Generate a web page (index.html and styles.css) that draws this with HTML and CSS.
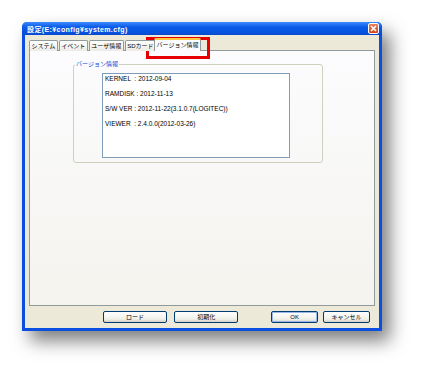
FILE: index.html
```html
<!DOCTYPE html>
<html lang="ja">
<head>
    <meta charset="UTF-8">
    <title>設定</title>
    <link rel="stylesheet" href="styles.css">
</head>
<body>

<div class="page">
    <div class="window">
        <div class="titlebar">
            <span class="title">設定(E:¥config¥system.cfg)</span>
            <span class="close">
                <svg width="9" height="9" viewBox="0 0 9 9"><path d="M2 2 L7 7 M7 2 L2 7" stroke="#fff" stroke-width="1.6"/></svg>
            </span>
        </div>
        <div class="client">
            <div class="tabs">
                <div class="tab">システム</div>
                <div class="tab">イベント</div>
                <div class="tab">ユーザ情報</div>
                <div class="tab">SDカード</div>
                <div class="tab active">バージョン情報</div>
            </div>
            <div class="panel">
                <fieldset class="group">
                    <legend>バージョン情報</legend>
                    <div class="infobox">
                        <p>KERNEL&nbsp; : 2012-09-04</p>
                        <p>RAMDISK : 2012-11-13</p>
                        <p>S/W VER : 2012-11-22(3.1.0.7(LOGITEC))</p>
                        <p>VIEWER&nbsp; : 2.4.0.0(2012-03-26)</p>
                    </div>
                </fieldset>
            </div>
            <div class="buttons">
                <button type="button" class="btn wide">ロード</button>
                <button type="button" class="btn wide">初期化</button>
                <button type="button" class="btn narrow ok">OK</button>
                <button type="button" class="btn narrow">キャンセル</button>
            </div>
        </div>
    </div>
    <!-- red mark around the active tab -->
    <div class="highlight"></div>
</div>

</body>
</html>
```

FILE: styles.css
```css
body {
    margin: 0;
    padding: 0;
    background-color: #fff;
    font-family: "Liberation Sans", "Noto Sans CJK JP", sans-serif;
    font-size: 6px;
}

.page {
    position: relative;
    width: 424px;
    height: 373px;
    padding: 22px 0 0 22px;
    box-sizing: border-box;
}

.window {
    width: 360px;
    height: 309px;
    box-sizing: border-box;
    padding: 0 3px 3px 3px;
    background-color: #0a4fe0;
    border-radius: 5px 5px 0 0;
    display: flex;
    flex-direction: column;
    box-shadow: 8px 10px 18px rgba(0, 0, 0, 0.5);
}

.titlebar {
    height: 16px;
    display: flex;
    align-items: center;
    justify-content: space-between;
    background: linear-gradient(#3b8afd, #0a5ae8 40%, #0653e0 80%, #0a48c8);
    margin: 0 -3px;
    padding: 0 3px 0 5px;
    border-radius: 5px 5px 0 0;
}

.title {
    color: #fff;
    font-weight: bold;
    font-size: 7px;
    letter-spacing: 0.4px;
}

.close {
    width: 11px;
    height: 11px;
    box-sizing: border-box;
    border: 1px solid #fff;
    border-radius: 2px;
    background: linear-gradient(#e8805c, #d3441c);
    display: flex;
    align-items: center;
    justify-content: center;
}

.client {
    flex: 1;
    background-color: #ece9d8;
    padding: 4px 4px 0 4px;
    display: flex;
    flex-direction: column;
}

.tabs {
    display: flex;
    align-items: flex-end;
    height: 12px;
    position: relative;
    z-index: 1;
    margin-bottom: -1px;
}

.tab {
    height: 10px;
    line-height: 10px;
    padding: 0 1.5px;
    border: 1px solid #919b9c;
    border-bottom: none;
    border-radius: 2px 2px 0 0;
    background: linear-gradient(#fff, #ecebe6);
    color: #000;
    font-size: 6px;
    white-space: nowrap;
    margin-right: 1px;
}

.tab.active {
    height: 11px;
    line-height: 11px;
    margin-left: -3px;
    padding: 0 1.5px;
    background: #fcfcfe;
    border-top: 2px solid #ffc83c;
}

.panel {
    height: 256px;
    box-sizing: border-box;
    border: 1px solid #919b9c;
    background: linear-gradient(#fcfcfe, #f4f3ee);
    padding: 9px 0 0 43px;
}

.group {
    width: 250px;
    height: 103px;
    box-sizing: border-box;
    margin: 0;
    padding: 5px 0 0 0;
    border: 1px solid #d0d0bf;
    border-radius: 3px;
}

.group legend {
    color: #0046d5;
    padding: 0 1px;
    margin-left: 1px;
    font-size: 6px;
    line-height: 8px;
}

.infobox {
    width: 188px;
    height: 85px;
    margin-left: 28px;
    box-sizing: border-box;
    border: 1px solid #7f9db9;
    background-color: #fff;
    padding: 1px 2px;
}

.infobox p {
    margin: 0;
    height: 15px;
    line-height: 8px;
    font-size: 6.5px;
    color: #000;
}

.buttons {
    display: flex;
    padding: 5px 0 0 74px;
    height: 22px;
    box-sizing: border-box;
}

.btn {
    height: 12px;
    padding: 0;
    border: 1px solid #003c74;
    border-radius: 2px;
    background: linear-gradient(#fff, #f0f0ea 70%, #d6d0c5);
    font-family: "Liberation Sans", "Noto Sans CJK JP", sans-serif;
    font-size: 6px;
    line-height: 10px;
    color: #000;
}

.btn.wide {
    width: 67px;
    margin-right: 7px;
}

.btn.wide + .btn.wide {
    margin-right: 33px;
}

.btn.narrow {
    width: 49px;
    margin-right: 5px;
}

.btn.ok {
    box-shadow: inset 0 0 0 1px #98b8ea;
}

.highlight {
    position: absolute;
    left: 146px;
    top: 37px;
    width: 64px;
    height: 22px;
    box-sizing: border-box;
    border: 3px solid #e60000;
}
```
